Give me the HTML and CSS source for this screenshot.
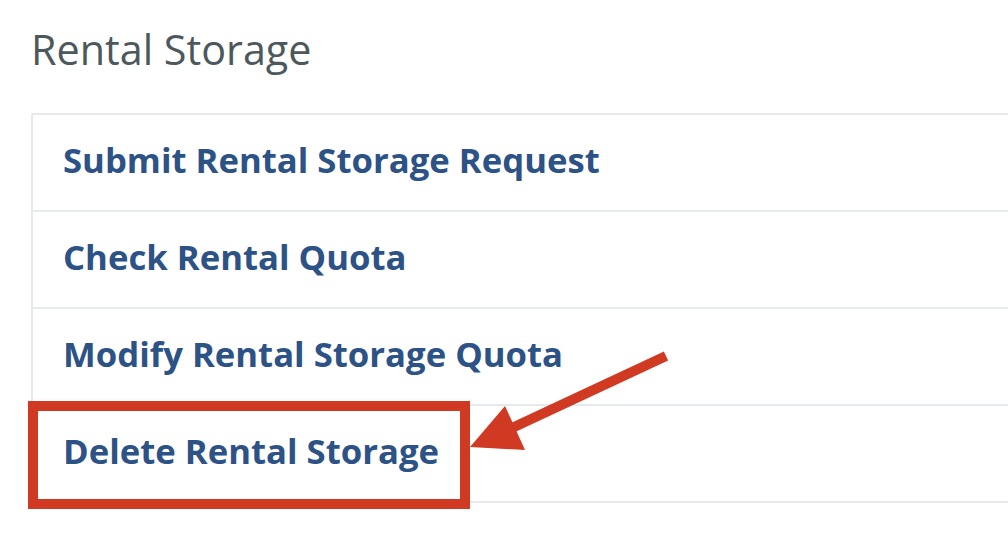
FILE: index.html
```html
<!DOCTYPE html>
<html>
<head>
<meta charset="utf-8">
<link rel="stylesheet" href="styles.css">
</head>
<body>
<div class="page">
  <h1 class="title">Rental Storage</h1>
  <ul class="menu">
    <li class="item"><a class="link" href="#">Submit Rental Storage Request</a></li>
    <li class="item"><a class="link" href="#">Check Rental Quota</a></li>
    <li class="item"><a class="link" href="#">Modify Rental Storage Quota</a></li>
    <li class="item item-marked"><a class="link" href="#">Delete Rental Storage</a>
      <span class="highlight"></span>
    </li>
  </ul>
  <svg class="arrow" width="1008" height="538" viewBox="0 0 1008 538">
    <line x1="666" y1="356" x2="512" y2="428" stroke="#d13a22" stroke-width="10"/>
    <polygon points="470,447 505,406 525,450" fill="#d13a22"/>
  </svg>
</div>
</body>
</html>
```
FILE: styles.css
```css
html, body {
  margin: 0;
  padding: 0;
  background: #ffffff;
}
.page {
  position: relative;
  width: 1008px;
  height: 538px;
  overflow: hidden;
  font-family: "Open Sans", "Liberation Sans", sans-serif;
}
.title {
  margin: 0;
  padding: 21px 0 0 31px;
  height: 113px;
  box-sizing: border-box;
  font-size: 41.3px;
  font-weight: 400;
  color: #4c585c;
  line-height: 56px;
}
.menu {
  list-style: none;
  margin: 0 0 0 31px;
  padding: 0;
  border-top: 2px solid #e6eaee;
  border-left: 2px solid #e6eaee;
}
.item {
  position: relative;
  height: 95px;
  box-sizing: content-box;
  border-bottom: 2px solid #e6eaee;
  display: flex;
  align-items: center;
  padding-left: 30px;
}
.link {
  color: #2c5286;
  font-weight: 700;
  font-size: 34.7px;
  line-height: 48px;
  margin-bottom: 6px;
  text-decoration: none;
}
.highlight {
  position: absolute;
  left: -5px;
  top: -5px;
  width: 442px;
  height: 108px;
  box-sizing: border-box;
  border: 10px solid #d13a22;
}
.arrow {
  position: absolute;
  left: 0;
  top: 0;
  pointer-events: none;
}
```
